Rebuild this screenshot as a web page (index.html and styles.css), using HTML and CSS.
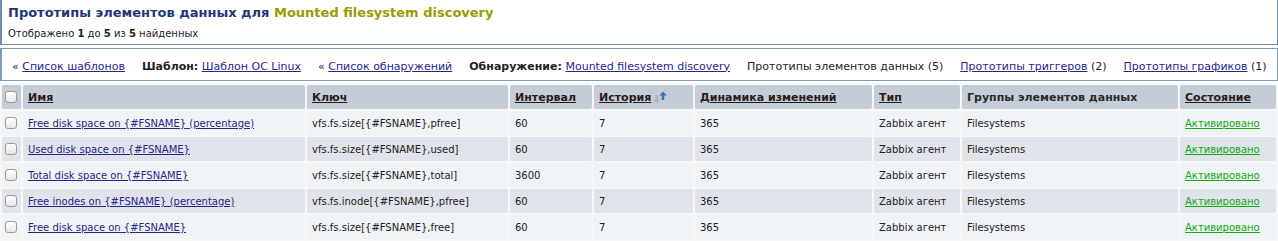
FILE: index.html
```html
<!DOCTYPE html>
<html lang="ru">
<head>
    <meta charset="UTF-8">
    <title>Прототипы элементов данных</title>
    <link rel="stylesheet" href="styles.css">
</head>
<body>
    <div class="header-box">
        <h1>Прототипы элементов данных для <span>Mounted filesystem discovery</span></h1>
        <p class="found">Отображено <b>1</b> до <b>5</b> из <b>5</b> найденных</p>
    </div>

    <div class="nav-box">
        <span class="item">« <a href="#">Список шаблонов</a></span>
        <span class="item"><b>Шаблон:</b> <a href="#">Шаблон ОС Linux</a></span>
        <span class="item">« <a href="#">Список обнаружений</a></span>
        <span class="item"><b>Обнаружение:</b> <a href="#">Mounted filesystem discovery</a></span>
        <span class="item">Прототипы элементов данных (5)</span>
        <span class="item"><a href="#">Прототипы триггеров</a> (2)</span>
        <span class="item"><a href="#">Прототипы графиков</a> (1)</span>
    </div>

    <table class="items">
        <colgroup>
            <col style="width: 19px">
            <col style="width: 282px">
            <col style="width: 201px">
            <col style="width: 82px">
            <col style="width: 99px">
            <col style="width: 177px">
            <col style="width: 86px">
            <col style="width: 216px">
            <col style="width: 96px">
        </colgroup>
        <thead>
            <tr>
                <th class="cb"><span class="check"></span></th>
                <th><a href="#">Имя</a></th>
                <th><a href="#">Ключ</a></th>
                <th><a href="#">Интервал</a></th>
                <th><a href="#">История</a><svg class="sort" width="14" height="13" viewBox="0 0 14 13">
                        <path d="M2.5 4h2.5v4.5h2.5L3.75 12.5 0 8.5h2.5z" fill="#b4b4b4"/>
                        <path d="M8.75 9h2.5V4.5h2.5L10 0.5 6.25 4.5h2.5z" fill="#3d6db3"/>
                    </svg></th>
                <th><a href="#">Динамика изменений</a></th>
                <th><a href="#">Тип</a></th>
                <th>Группы элементов данных</th>
                <th><a href="#">Состояние</a></th>
            </tr>
        </thead>
        <tbody>
            <tr>
                <td class="cb"><span class="check"></span></td>
                <td><a href="#">Free disk space on {#FSNAME} (percentage)</a></td>
                <td>vfs.fs.size[{#FSNAME},pfree]</td>
                <td>60</td>
                <td>7</td>
                <td>365</td>
                <td>Zabbix агент</td>
                <td>Filesystems</td>
                <td><a class="enabled" href="#">Активировано</a></td>
            </tr>
            <tr>
                <td class="cb"><span class="check"></span></td>
                <td><a href="#">Used disk space on {#FSNAME}</a></td>
                <td>vfs.fs.size[{#FSNAME},used]</td>
                <td>60</td>
                <td>7</td>
                <td>365</td>
                <td>Zabbix агент</td>
                <td>Filesystems</td>
                <td><a class="enabled" href="#">Активировано</a></td>
            </tr>
            <tr>
                <td class="cb"><span class="check"></span></td>
                <td><a href="#">Total disk space on {#FSNAME}</a></td>
                <td>vfs.fs.size[{#FSNAME},total]</td>
                <td>3600</td>
                <td>7</td>
                <td>365</td>
                <td>Zabbix агент</td>
                <td>Filesystems</td>
                <td><a class="enabled" href="#">Активировано</a></td>
            </tr>
            <tr>
                <td class="cb"><span class="check"></span></td>
                <td><a href="#">Free inodes on {#FSNAME} (percentage)</a></td>
                <td>vfs.fs.inode[{#FSNAME},pfree]</td>
                <td>60</td>
                <td>7</td>
                <td>365</td>
                <td>Zabbix агент</td>
                <td>Filesystems</td>
                <td><a class="enabled" href="#">Активировано</a></td>
            </tr>
            <tr>
                <td class="cb"><span class="check"></span></td>
                <td><a href="#">Free disk space on {#FSNAME}</a></td>
                <td>vfs.fs.size[{#FSNAME},free]</td>
                <td>60</td>
                <td>7</td>
                <td>365</td>
                <td>Zabbix агент</td>
                <td>Filesystems</td>
                <td><a class="enabled" href="#">Активировано</a></td>
            </tr>
        </tbody>
    </table>
</body>
</html>
```

FILE: styles.css
```css
body {
    font-family: "DejaVu Sans", Verdana, sans-serif;
    font-size: 10px;
    color: #222;
    background-color: #ffffff;
    margin: 0;
}

a {
    color: #26268a;
}

.header-box {
    border: 1px solid #6f8db3;
    border-top: none;
    border-left-width: 2px;
    padding: 5px 6px 2px;
    height: 37px;
}

.header-box h1 {
    font-size: 13px;
    font-weight: bold;
    color: #1f3677;
    margin: 0;
}

.header-box h1 span {
    color: #9c9a00;
}

.header-box .found {
    margin: 8px 0 0;
}

.nav-box {
    margin-top: 3px;
    border: 1px solid #7f9abc;
    border-left-width: 2px;
    display: flex;
    align-items: center;
    gap: 17px;
    padding-left: 10px;
    padding-top: 3px;
    box-sizing: border-box;
    height: 33px;
    font-size: 11px;
    white-space: nowrap;
}

.items {
    width: 1278px;
    table-layout: fixed;
    border-spacing: 2px;
    background-color: #f6f7f8;
    margin-top: 2px;
}

.items th,
.items td {
    height: 24px;
    padding: 0 5px;
    text-align: left;
    white-space: nowrap;
    border-radius: 2px;
}

.items th {
    background-color: #c4cdd7;
    font-size: 11px;
    font-weight: bold;
    color: #2a2a2a;
}

.items th a {
    color: #2b1b1b;
}

.items tbody tr:nth-child(odd) td {
    background-color: #f0f4f7;
}

.items tbody tr:nth-child(even) td {
    background-color: #e0e4ea;
}

.items .cb {
    padding: 0;
}

.check {
    display: block;
    width: 10px;
    height: 10px;
    margin-left: 3px;
    border: 1px solid #9a9a9a;
    border-radius: 3px;
    background: linear-gradient(#ffffff, #e6e6e6);
}

.sort {
    vertical-align: top;
    margin-left: 2px;
}

.items a.enabled {
    color: #11aa11;
}
```
